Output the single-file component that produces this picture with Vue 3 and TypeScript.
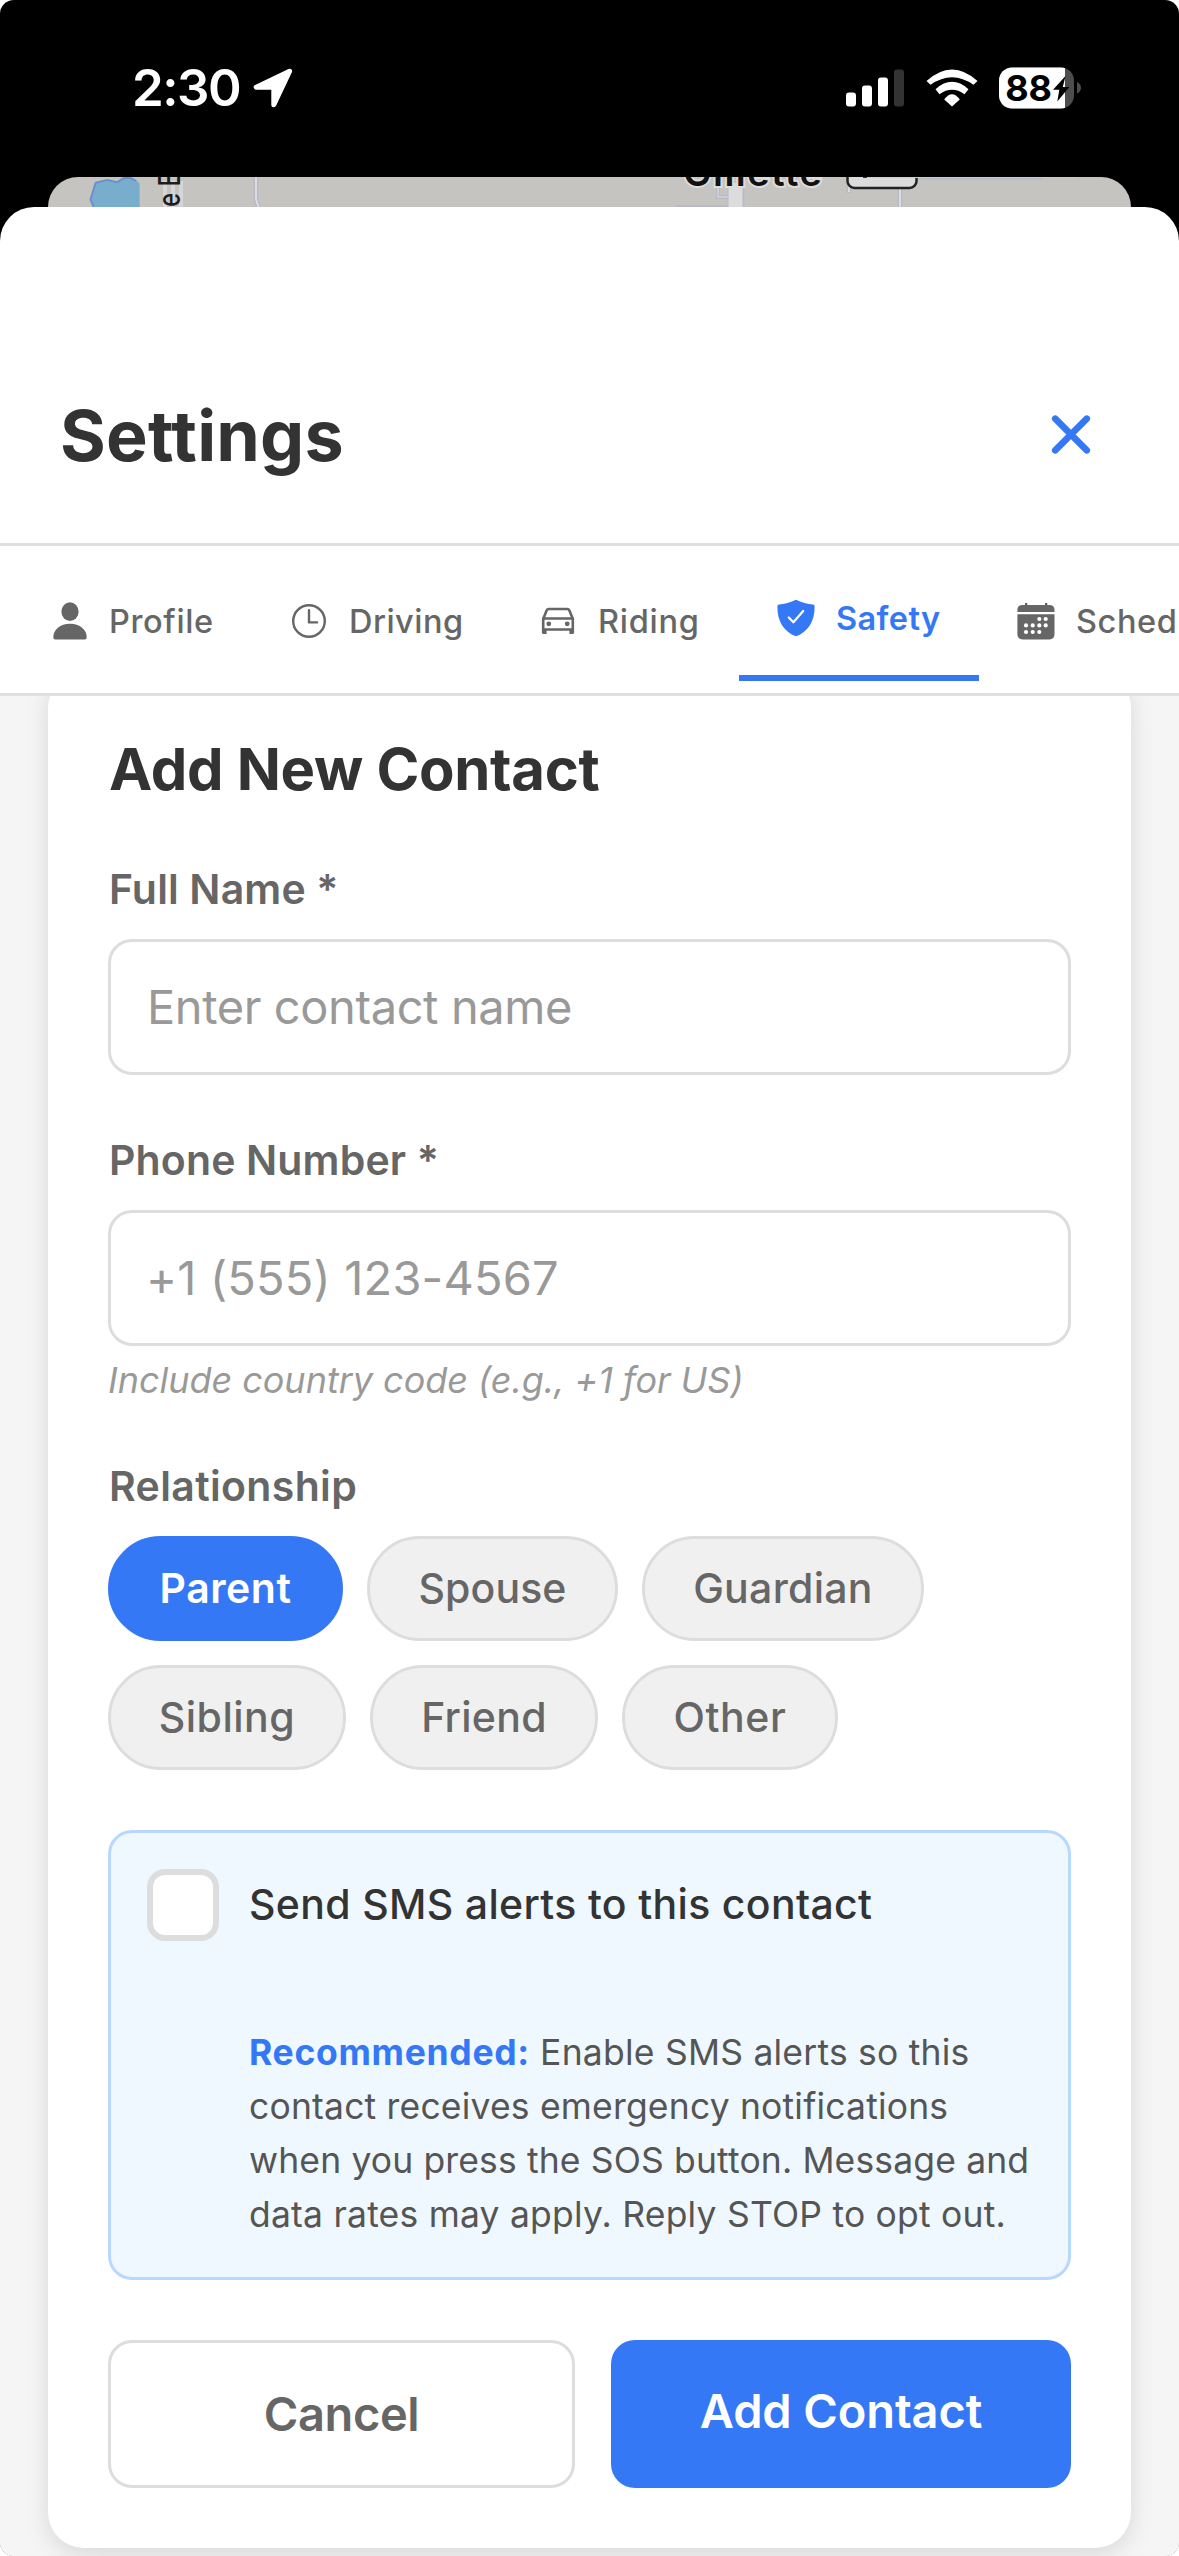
<script setup lang="ts">
import { ref } from 'vue'

type IconName = 'person' | 'clock' | 'car' | 'shield' | 'calendar'

interface Tab {
  label: string
  icon: IconName
  width: number
  spacing: number
}

interface Chip {
  label: string
  width: number
  spacing: number
}

const tabs: Tab[] = [
  { label: 'Profile', icon: 'person', width: 240, spacing: 0.63 },
  { label: 'Driving', icon: 'clock', width: 249, spacing: 0.5 },
  { label: 'Riding', icon: 'car', width: 238, spacing: 0.75 },
  { label: 'Safety', icon: 'shield', width: 240, spacing: 0.4 },
  { label: 'Schedule', icon: 'calendar', width: 270, spacing: 0.6 },
]

const relationships: Chip[][] = [
  [
    { label: 'Parent', width: 235, spacing: 0.5 },
    { label: 'Spouse', width: 251, spacing: 0.1 },
    { label: 'Guardian', width: 282, spacing: 0.3 },
  ],
  [
    { label: 'Sibling', width: 238, spacing: 0.5 },
    { label: 'Friend', width: 228, spacing: 0.3 },
    { label: 'Other', width: 216, spacing: 0.6 },
  ],
]

const calendarDots: [number, number][] = [
  [24.3, 19], [30.7, 19],
  [11, 25.4], [17.7, 25.4], [24.3, 25.4], [30.7, 25.4],
  [11, 32], [17.7, 32], [24.3, 32],
]

const activeTab = ref('Safety')
const relationship = ref('Parent')
const fullName = ref('')
const phone = ref('')
const smsAlerts = ref(false)
</script>

<template>
  <div class="screen">
    <div class="status">
      <div class="status-left">
        <span class="time">2:30</span>
        <svg class="location" width="40" height="40" viewBox="0 0 40 40">
          <path d="M36.6 3.2 L3.2 19.2 H19.8 Q20.8 19.2 20.8 20.2 V36.8 Z" fill="#fff" stroke="#fff" stroke-width="5" stroke-linejoin="round" />
        </svg>
      </div>
      <div class="status-right">
        <svg width="58" height="38" viewBox="0 0 58 38">
          <rect x="0" y="23.5" width="10" height="14" rx="3" fill="#fff" />
          <rect x="16" y="16.5" width="10" height="21" rx="3" fill="#fff" />
          <rect x="32" y="8.5" width="10" height="29" rx="3" fill="#fff" />
          <rect x="48" y="0.5" width="10" height="37" rx="3" fill="#333" />
        </svg>
        <svg class="wifi" width="52" height="38" viewBox="0 0 52 38" fill="#fff">
          <path d="M.5 12 Q26 -11 51.5 12 L47.5 15.8 Q26 .6 4.5 15.8Z" />
          <path d="M9.5 20.2 Q26 5.4 42.5 20.2 L38.5 25.2 Q26 16.4 13.5 25.2Z" />
          <path d="M18.2 30.5 Q26 19.9 33.8 30.5 L26 37.5Z" />
        </svg>
        <svg class="battery" width="83" height="42" viewBox="0 0 83 42">
          <defs>
            <clipPath id="battery-shell"><rect x="0" y="0.5" width="75" height="41" rx="13" /></clipPath>
          </defs>
          <g clip-path="url(#battery-shell)">
            <rect width="75" height="42" fill="#4d4d4d" />
            <rect width="66" height="42" fill="#fff" />
          </g>
          <path d="M78 15 Q82 17 82 20.8 T78 26.6Z" fill="#4d4d4d" />
          <text x="6.2" y="34" font-size="36" font-weight="700" fill="#000">88</text>
          <path d="M66.5 9 L54 22.8 H60.3 L58.3 34.5 L70.3 20 H63.8Z" fill="#000" />
        </svg>
      </div>
    </div>

    <svg class="map" width="1083" height="30" viewBox="0 0 1083 30">
      <rect width="1083" height="30" fill="#c5c4c0" />
      <path d="M46 31 L42.500 22 L47.600 5.300 L59 2.500 L69.400 4.700 L76 .3 L84 .5 Q88 2 91.600 6.500 V31Z" fill="#78aecc" />
      <path d="M46 31 L42.500 22.500 L47.600 5.800 L59 3 L69.400 5.200 L76 .8 L83 1.200 L88 4" fill="none" stroke="#6b90cf" stroke-width="2" />
      <path d="M117 4 V30 M125 4 V30 M133 4 V30" stroke="#d6d5d8" stroke-width="4" />
      <text class="street" transform="translate(131.500 30) rotate(-90) scale(.8 1)">e E</text>
      <path d="M208 0 V22 L210.500 30" fill="none" stroke="#b8bac8" stroke-width="5" />
      <path d="M208 0 V22 L210.500 30" fill="none" stroke="#dcdce0" stroke-width="2" />
      <path d="M670 6 V20 H681 M628 30 H681" fill="none" stroke="#b8bac8" stroke-width="4" />
      <path d="M670 6 V20 H681" fill="none" stroke="#d4d4d8" stroke-width="1.500" />
      <path d="M688 6 V30" stroke="#b9bbc8" stroke-width="17" />
      <path d="M687.500 6 V30" stroke="#dcdcdc" stroke-width="14" />
      <path d="M801 8 V16 M852 8 V30" stroke="#b8bac8" stroke-width="5" />
      <path d="M801 8 V15 M852 8 V30" stroke="#dcdce0" stroke-width="2" />
      <text class="city" x="635" y="8.500" textLength="139">Gillette</text>
      <rect x="799.500" y="-24" width="69" height="35" rx="7" fill="#dcdcdc" stroke="#232323" stroke-width="2.500" />
      <path d="M815 0 H821" stroke="#333" stroke-width="2" />
      <path d="M870 1.800 H995" stroke="#b3bac7" stroke-width="1.600" />
      <path d="M819 .5 H1028" stroke="#e0da4a" stroke-width="1.200" />
    </svg>

    <div class="sheet">
      <header class="header">
        <h1>Settings</h1>
        <svg width="42" height="42" viewBox="0 0 42 42">
          <path d="M5.200 4.700 L36.800 36.300 M36.800 4.700 L5.200 36.300" stroke="#3478f6" stroke-width="6.600" stroke-linecap="round" />
        </svg>
      </header>

      <nav class="tabs">
        <div
          v-for="tab in tabs"
          :key="tab.label"
          class="tab"
          :class="{ active: tab.label === activeTab }"
          :style="{ width: tab.width + 'px' }"
          @click="activeTab = tab.label"
        >
          <svg width="42" height="42" viewBox="0 0 42 42">
            <g v-if="tab.icon === 'person'" fill="currentColor">
              <ellipse cx="22" cy="11.700" rx="8.600" ry="9.400" />
              <path d="M5.300 37 C5.300 30 12 23.700 22 23.700 S38.700 30 38.700 37 Q38.700 39.600 36 39.600 H8 Q5.300 39.600 5.300 37Z" />
            </g>
            <g v-else-if="tab.icon === 'clock'" fill="none" stroke="currentColor" stroke-width="2.400" stroke-linecap="round" stroke-linejoin="round">
              <circle cx="21" cy="21" r="15.800" />
              <path d="M21 10.200 V22.400 H29" />
            </g>
            <g v-else-if="tab.icon === 'car'" fill="none" stroke="currentColor" stroke-width="2.600" stroke-linejoin="round">
              <path d="M6.200 19 L9.600 10.600 Q10.200 9 11.800 9 H30.200 Q31.800 9 32.400 10.600 L35.800 19" />
              <path d="M6.200 33 V18.500 H35.800 V33 M6.200 29.500 H35.800" />
              <path d="M7.500 29.500 V34 M34.500 29.500 V34" stroke-width="4.200" />
              <circle cx="11.800" cy="23.800" r="2.400" fill="currentColor" stroke="none" />
              <circle cx="30.200" cy="23.800" r="2.400" fill="currentColor" stroke="none" />
            </g>
            <g v-else-if="tab.icon === 'shield'">
              <path fill="currentColor" d="M21 2.700 C16 5.500 9 7 4 7.400 Q2.500 7.600 2.400 9 C2 24 9 35 21 39.300 C33 35 40 24 39.600 9 Q39.500 7.600 38 7.400 C33 7 26 5.500 21 2.700Z" />
              <path d="M13.800 20.500 L18.400 25.300 L28.200 14" fill="none" stroke="#fff" stroke-width="2.200" stroke-linecap="round" stroke-linejoin="round" />
            </g>
            <g v-else fill="currentColor">
              <path d="M9.900 6 V3.800 Q9.900 2.700 11.100 2.700 T12.400 3.800 V6Z M29.900 6 V3.800 Q29.900 2.700 31.100 2.700 T32.400 3.800 V6Z" />
              <path d="M2.400 12 V10 Q2.400 4.900 7.500 4.900 H34.400 Q39.500 4.900 39.500 10 V12Z" />
              <path d="M2.400 14.300 H39.500 V34.300 Q39.500 39.400 34.400 39.400 H7.500 Q2.400 39.400 2.400 34.300Z" />
              <circle v-for="([x, y], i) in calendarDots" :key="i" :cx="x" :cy="y" r="2.100" fill="#fff" />
            </g>
          </svg>
          <span :style="{ letterSpacing: tab.spacing + 'px' }">{{ tab.label }}</span>
        </div>
      </nav>

      <main class="content">
        <section class="card">
          <h2>Add New Contact</h2>

          <label class="label first" for="full-name">Full Name *</label>
          <input id="full-name" v-model="fullName" class="field name" type="text" placeholder="Enter contact name" />

          <label class="label" for="phone">Phone Number *</label>
          <input id="phone" v-model="phone" class="field phone" type="tel" placeholder="+1 (555) 123-4567" />
          <p class="hint">Include country code (e.g., +1 for US)</p>

          <div class="label relation">Relationship</div>
          <div class="chips">
            <div v-for="(row, r) in relationships" :key="r" class="chip-row">
              <button
                v-for="chip in row"
                :key="chip.label"
                type="button"
                class="chip"
                :class="{ selected: chip.label === relationship }"
                :style="{ width: chip.width + 'px', letterSpacing: chip.spacing + 'px' }"
                @click="relationship = chip.label"
              >{{ chip.label }}</button>
            </div>
          </div>

          <div class="sms">
            <label class="sms-row">
              <input v-model="smsAlerts" class="check" type="checkbox" />
              <span class="sms-title">Send SMS alerts to this contact</span>
            </label>
            <p class="sms-note">
              <span class="l1"><strong>Recommended:</strong> Enable SMS alerts so this</span>
              <span class="l2">contact receives emergency notifications</span>
              <span class="l3">when you press the SOS button. Message and</span>
              <span class="l4">data rates may apply. Reply STOP to opt out.</span>
            </p>
          </div>

          <div class="actions">
            <button type="button" class="cancel">Cancel</button>
            <button type="button" class="add">Add Contact</button>
          </div>
        </section>
      </main>
    </div>
  </div>
</template>

<style>
body {
  background: #fff;
}
</style>

<style scoped>
.screen,
.screen * {
  box-sizing: border-box;
}

.screen {
  display: flex;
  flex-direction: column;
  width: 1179px;
  height: 2556px;
  overflow: hidden;
  border-radius: 14px;
  background: #000;
  font-family: Inter, 'Liberation Sans', sans-serif;
}

h1,
h2,
p {
  margin: 0;
}

svg {
  display: block;
  flex: none;
}

button,
input {
  font-family: inherit;
  margin: 0;
}

.status {
  flex: none;
  height: 177px;
  padding: 0 97px 2px 132px;
  display: flex;
  align-items: center;
  justify-content: space-between;
  color: #fff;
}

.status-left,
.status-right {
  display: flex;
  align-items: center;
}

.time {
  font-size: 51px;
  font-weight: 600;
  letter-spacing: -1.5px;
}

.location {
  margin-left: 13px;
}

.wifi {
  margin-left: 21.500px;
}

.battery {
  margin-left: 21.500px;
}

.map {
  margin: 0 48px;
  border-radius: 30px 30px 0 0;
}

.street {
  font-size: 30px;
  font-weight: 500;
  fill: #1c1c1c;
}

.city {
  font-size: 38px;
  font-weight: 600;
  fill: #111;
  stroke: #dcdcdc;
  stroke-width: 4px;
  paint-order: stroke;
}

.sheet {
  flex: 1;
  min-height: 0;
  display: flex;
  flex-direction: column;
  overflow: hidden;
  border-radius: 34px 34px 0 0;
  background: #fff;
}

.header {
  flex: none;
  height: 339px;
  padding: 120px 87px 0 60px;
  display: flex;
  align-items: center;
  justify-content: space-between;
  border-bottom: 3px solid #e0e0e0;
}

h1 {
  font-size: 70px;
  font-weight: 700;
  letter-spacing: 0.2px;
  color: #333;
}

.tabs {
  flex: none;
  height: 150px;
  padding: 15px 0 12px 12px;
  display: flex;
  overflow: hidden;
  border-bottom: 3px solid #e0e0e0;
}

.tab {
  flex: none;
  display: flex;
  align-items: center;
  gap: 19px;
  padding-left: 36px;
  font-size: 32.5px;
  font-weight: 500;
  color: #666;
  white-space: nowrap;
}

.tab.active {
  border-bottom: 6px solid #3478f6;
  color: #3478f6;
  font-weight: 600;
}

.content {
  flex: 1;
  min-height: 0;
  padding: 0 48px;
  overflow: hidden;
  background: #f5f5f5;
}

.card {
  height: 1876px;
  margin-top: -24px;
  padding: 61px 60px 60px;
  border-radius: 36px;
  background: #fff;
  box-shadow: 0 6px 24px rgba(0, 0, 0, 0.12);
}

h2 {
  padding-left: 1px;
  font-size: 58px;
  line-height: 72px;
  font-weight: 700;
  letter-spacing: -0.3px;
  color: #333;
}

.label {
  display: block;
  margin-top: 61px;
  padding-left: 1px;
  font-size: 41px;
  line-height: 48px;
  font-weight: 600;
  letter-spacing: 0.15px;
  color: #666;
}

.label.first {
  margin-top: 60px;
}

.label.relation {
  margin-top: 60px;
  letter-spacing: 0.35px;
}

.field {
  display: block;
  width: 100%;
  height: 136px;
  margin-top: 26px;
  padding: 0 36px 2px;
  border: 3px solid #ddd;
  border-radius: 24px;
  background: #fff;
  outline: none;
  font-size: 47px;
  color: #333;
}

.field::placeholder {
  color: #999;
  opacity: 1;
}

.name {
  letter-spacing: -0.4px;
}

.phone {
  padding-left: 35px;
  letter-spacing: 0.18px;
}

.hint {
  margin-top: 12px;
  font-size: 36px;
  line-height: 44px;
  font-style: italic;
  letter-spacing: -0.03px;
  color: #999;
}

.chips {
  display: flex;
  flex-direction: column;
  gap: 24px;
  margin-top: 26px;
}

.chip-row {
  display: flex;
  gap: 24px;
}

.chip {
  height: 105px;
  padding: 0 0 2px;
  border: 3px solid #ddd;
  border-radius: 53px;
  background: #f0f0f0;
  font-size: 41px;
  font-weight: 500;
  color: #666;
}

.chip.selected {
  border-color: #3478f6;
  background: #3478f6;
  font-weight: 600;
  color: #fff;
}

.sms {
  height: 450px;
  margin-top: 60px;
  padding: 36px;
  border: 3px solid #b8d8ff;
  border-radius: 24px;
  background: #f0f8ff;
}

.sms-row {
  display: flex;
  align-items: center;
  gap: 30px;
  font-size: 41px;
  line-height: 48px;
  font-weight: 500;
  letter-spacing: 0.33px;
  color: #333;
}

.sms-title {
  padding-bottom: 2px;
}

.check {
  appearance: none;
  flex: none;
  width: 72px;
  height: 72px;
  border: 6px solid #ddd;
  border-radius: 18px;
  background: #fff;
}

.sms-note {
  margin-top: 85px;
  padding-left: 102px;
  font-size: 35.5px;
  line-height: 54px;
  color: #555;
  white-space: nowrap;
}

.sms-note span {
  display: block;
}

.sms-note strong {
  font-weight: 700;
  letter-spacing: 0.7px;
  color: #3478f6;
}

.l1 {
  letter-spacing: 0.22px;
}

.l2 {
  letter-spacing: 0.18px;
}

.l3 {
  letter-spacing: 0.14px;
}

.l4 {
  letter-spacing: 0.21px;
}

.actions {
  display: flex;
  gap: 36px;
  margin-top: 60px;
}

.actions button {
  height: 148px;
  padding: 0 0 2px;
  border-radius: 24px;
  font-size: 47px;
  font-weight: 600;
}

.cancel {
  width: 467px;
  border: 3px solid #ddd;
  background: #fff;
  letter-spacing: -0.4px;
  color: #666;
}

.actions .add {
  flex: 1;
  padding-bottom: 7px;
  border: 0;
  background: #3478f6;
  letter-spacing: -0.12px;
  color: #fff;
}
</style>
